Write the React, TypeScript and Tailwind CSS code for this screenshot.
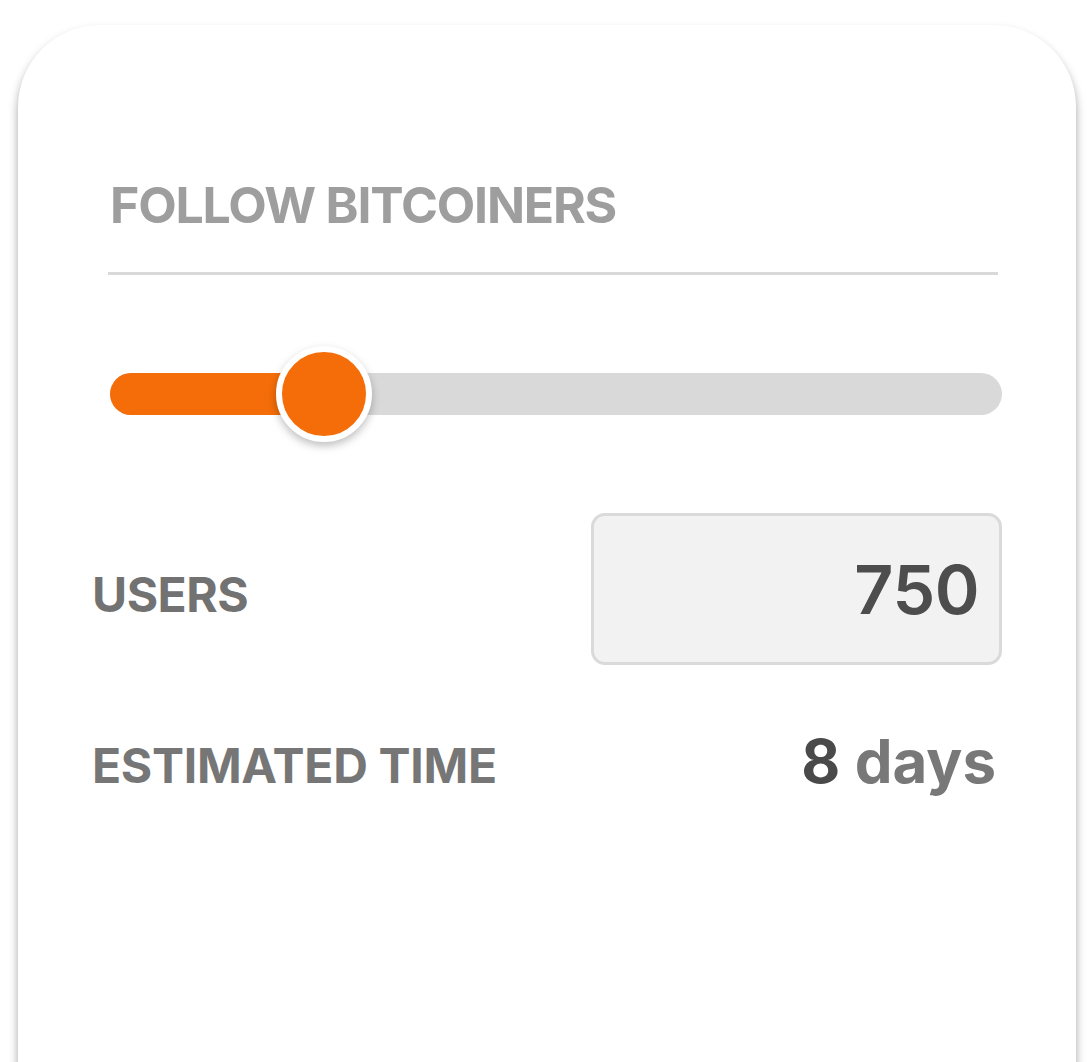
import React, { useState } from 'react'

const font = { fontFamily: 'Inter, "Noto Sans", sans-serif' }

export default function App() {
  const [users] = useState(750)
  const pct = 24 // slider position

  return (
    <div className="h-screen w-full overflow-hidden bg-white" style={font}>
      <div className="ml-[18px] mt-[25px] w-[1058px] h-[1200px] rounded-[82px] bg-white shadow-[0_6px_10px_rgba(0,0,0,0.36)] px-[74px] pt-[155px]">
        {/* header */}
        <div className="pl-[18px] text-[50px] leading-none font-bold text-[#9e9e9e] tracking-[-1.2px]">
          FOLLOW BITCOINERS
        </div>
        <div className="mt-[42px] ml-[16px] mr-[4px] h-[3px] bg-[#d9d9d9]" />

        {/* slider */}
        <div className="relative mt-[98px] ml-[18px] h-[42px] rounded-full bg-[#d9d9d9]">
          <div className="h-full rounded-full bg-[#f46d08]" style={{ width: `${pct}%` }} />
          <div
            className="absolute top-1/2 -translate-x-1/2 -translate-y-1/2 w-[96px] h-[96px] rounded-full bg-[#f46d08] border-[6px] border-white shadow-[0_4px_8px_rgba(0,0,0,0.25)]"
            style={{ left: `${pct}%` }}
          />
        </div>

        {/* users */}
        <div className="mt-[98px] flex items-center justify-between">
          <span className="pt-[12px] text-[48px] leading-none font-bold text-[#727272] tracking-[-0.5px]">USERS</span>
          <div className="w-[411px] h-[152px] rounded-[14px] border-[3px] border-[#dadada] bg-[#f2f2f2] flex items-center justify-end pr-[20px]">
            <span className="text-[68px] leading-none font-semibold text-[#4d4d4d] tracking-[-0.5px]">{users}</span>
          </div>
        </div>

        {/* estimated */}
        <div className="mt-[66px] flex items-baseline justify-between pr-[6px]">
          <span className="text-[48px] leading-none font-bold text-[#767676] tracking-[-0.3px]">ESTIMATED TIME</span>
          <span className="text-[60px] leading-none font-bold text-[#787878]">
            <span className="text-[#4a4a4a]">8</span> days
          </span>
        </div>
      </div>
    </div>
  )
}
